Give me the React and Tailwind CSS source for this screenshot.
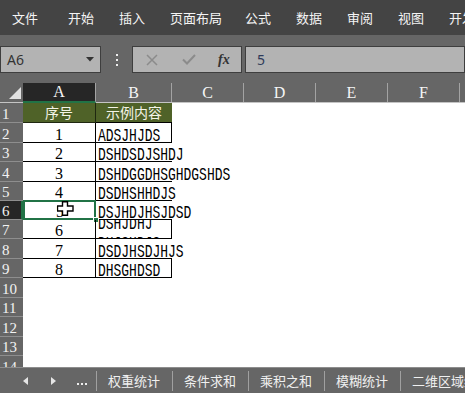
import React from 'react';

const cjk = "font-['Noto_Sans_CJK_SC',sans-serif]";
const serif = "font-['Liberation_Serif',serif]";
const mono = "inline-block origin-left scale-x-[0.72] whitespace-nowrap font-['Liberation_Mono',monospace] text-[18px] text-black";

const tabs = [
  { t: '文件', w: 'w-[56px]' },
  { t: '开始', w: 'w-[51px]' },
  { t: '插入', w: 'w-[51px]' },
  { t: '页面布局', w: 'w-[75px]' },
  { t: '公式', w: 'w-[51px]' },
  { t: '数据', w: 'w-[51px]' },
  { t: '审阅', w: 'w-[51px]' },
  { t: '视图', w: 'w-[51px]' },
  { t: '开发工具', w: 'w-[75px]' },
];

const cols = [
  { k: 'C', w: 'w-[72px]' },
  { k: 'D', w: 'w-[72px]' },
  { k: 'E', w: 'w-[72px]' },
  { k: 'F', w: 'w-[72px]' },
];

// B column: text, whether it spills into C (no right border), wrapped second line
const rows = [
  { n: 1, h: 'h-[20px]' },
  { n: 2, h: 'h-[20px]', a: '1', b: 'ADSJHJDS', box: true },
  { n: 3, h: 'h-[19px]', a: '2', b: 'DSHDSDJSHDJ' },
  { n: 4, h: 'h-[20px]', a: '3', b: 'DSHDGGDHSGHDGSHDS' },
  { n: 5, h: 'h-[19px]', a: '4', b: 'DSDHSHHDJS' },
  { n: 6, h: 'h-[19px]', a: '5', b: 'DSJHDJHSJDSD', sel: true },
  { n: 7, h: 'h-[19px]', a: '6', b: 'DSHJDHJ', b2: 'DHJSHDJS', box: true },
  { n: 8, h: 'h-[20px]', a: '7', b: 'DSDJHSDJHJS' },
  { n: 9, h: 'h-[19px]', a: '8', b: 'DHSGHDSD', box: true },
  { n: 10, h: 'h-[20px]' },
  { n: 11, h: 'h-[19px]' },
  { n: 12, h: 'h-[20px]' },
  { n: 13, h: 'h-[19px]' },
  { n: 14, h: 'h-[20px]' },
];

const sheets = ['权重统计', '条件求和', '乘积之和', '模糊统计', '二维区域统计'];

function Cursor() {
  return (
    <svg width="17" height="15" viewBox="0 0 17 15" className="absolute left-[32px] top-[0px]">
      <path d="M5.5 0.7h5v4.3h5.5v5h-5.5v4.3h-5v-4.3h-5v-5h5z" fill="#fff" stroke="#000" strokeWidth="1.4" />
    </svg>
  );
}

function SheetRow({ r }) {
  const head = r.n === 1;
  return (
    <div className={`flex ${r.h}`}>
      <div
        className={`w-[23px] shrink-0 flex items-end pb-[2px] pl-[2px] border-b border-[#8e8e8e] ${serif} text-[15px] leading-[12px] text-[#f2f2f2] ${
          r.sel ? 'bg-[#262626] border-r-2 border-r-[#217346]' : 'bg-[#666]'
        }`}
      >
        {r.n}
      </div>
      {head ? (
        <>
          <div className={`w-[73px] shrink-0 bg-[#4f6228] border-b border-r border-black/60 flex items-center justify-center ${cjk} text-[14px] text-[#f4f4e8]`}>
            序号
          </div>
          <div className={`w-[76px] shrink-0 bg-[#4f6228] border-b border-black flex items-center justify-center ${cjk} text-[14px] text-[#f4f4e8]`}>
            示例内容
          </div>
        </>
      ) : r.a ? (
        <>
          <div className={`relative ${r.sel ? 'w-[71px] ml-[2px]' : 'w-[73px]'} shrink-0 border-b border-r border-black flex items-end justify-center pb-[1px] ${serif} text-[16px] leading-[12px] text-black`}>
            {r.a}
            {r.sel && (
              <>
                <div className="absolute -left-[2px] -top-[1px] -right-[1px] -bottom-[1px] border-2 border-[#217346]" />
                <div className="absolute -right-[4px] -bottom-[4px] w-[6px] h-[6px] bg-[#217346] border border-white" />
                <Cursor />
              </>
            )}
          </div>
          {r.b2 ? (
            <div className="w-[76px] shrink-0 border-b border-r border-black overflow-hidden">
              <div className="-mt-[7px] pl-[2px] leading-[18px]">
                <div><span className={mono}>{r.b}</span></div>
                <div><span className={mono}>{r.b2}</span></div>
              </div>
            </div>
          ) : (
            <div className={`w-[76px] shrink-0 border-b border-black ${r.box ? 'border-r' : ''} flex items-end pl-[2px] leading-[12px]`}>
              <span className={mono}>{r.b}</span>
            </div>
          )}
        </>
      ) : null}
    </div>
  );
}

export default function App() {
  return (
    <div className={`w-[465px] h-[393px] overflow-hidden flex flex-col bg-[#666] ${cjk}`}>
      {/* ribbon tabs */}
      <div className="h-[35px] shrink-0 bg-[#444] flex items-center pl-[12px] whitespace-nowrap text-[13px] text-[#f4f4f4]">
        {tabs.map((t) => (
          <div key={t.t} className={`${t.w} shrink-0`}>
            {t.t}
          </div>
        ))}
      </div>

      {/* name box + formula bar */}
      <div className="h-[48px] shrink-0 bg-[#666] flex items-start pt-[11px]">
        <div className="w-[101px] h-[27px] shrink-0 bg-[#b3b3b3] border border-[#3e3e3e] flex items-center pl-[6px] pr-[6px]">
          <span className="font-['Noto_Sans',sans-serif] text-[14px] text-[#333] flex-1">A6</span>
          <svg width="8" height="5" viewBox="0 0 8 5"><path d="M0 0h8L4 4.5z" fill="#333" /></svg>
        </div>
        <div className="w-[31px] h-[27px] shrink-0 flex flex-col items-center justify-center gap-[3px]">
          <div className="w-[2px] h-[2px] bg-[#eee]" />
          <div className="w-[2px] h-[2px] bg-[#eee]" />
          <div className="w-[2px] h-[2px] bg-[#eee]" />
        </div>
        <div className="w-[110px] h-[27px] shrink-0 bg-[#b3b3b3] border border-[#3e3e3e] flex items-center">
          <svg width="12" height="12" viewBox="0 0 12 12" className="ml-[13px]">
            <path d="M1 1l10 10M11 1L1 11" stroke="#8b8b8b" strokeWidth="1.5" />
          </svg>
          <svg width="14" height="11" viewBox="0 0 14 11" className="ml-[24px]">
            <path d="M1 5.5l4 4L13 1" stroke="#8b8b8b" strokeWidth="2" fill="none" />
          </svg>
          <span className={`ml-[22px] ${serif} italic font-bold text-[14px] text-[#333]`}>fx</span>
        </div>
        <div className="flex-1 h-[27px] ml-[3px] bg-[#b3b3b3] border border-[#3e3e3e] flex items-center pl-[11px]">
          <span className="font-['Noto_Sans',sans-serif] text-[14px] text-[#2f3b5a]">5</span>
        </div>
      </div>

      {/* column headers */}
      <div className={`h-[20px] shrink-0 flex border-b border-[#c4c4c4] ${serif} text-[16px] text-[#f6f6f6]`}>
        <div className="w-[23px] shrink-0 relative">
          <svg width="12" height="12" viewBox="0 0 12 12" className="absolute left-[9px] top-[4px]">
            <path d="M0 12L12 0v12z" fill="#e2e2e2" />
          </svg>
        </div>
        <div className="w-[73px] shrink-0 bg-[#262626] border-r border-[#a3a3a3] border-b-2 border-b-[#217346] -mb-[1px] flex items-center justify-center leading-none">
          A
        </div>
        <div className="w-[76px] shrink-0 border-r border-[#a3a3a3] flex items-center justify-center leading-none">B</div>
        {cols.map((c) => (
          <div key={c.k} className={`${c.w} shrink-0 border-r border-[#a3a3a3] flex items-center justify-center leading-none`}>
            {c.k}
          </div>
        ))}
        <div className="flex-1" />
      </div>

      {/* grid */}
      <div className="flex-1 min-h-0 overflow-hidden bg-white relative">
        <div className="absolute left-0 top-0 bottom-0 w-[23px] bg-[#666]" />
        <div className="relative">
          {rows.map((r) => (
            <SheetRow key={r.n} r={r} />
          ))}
        </div>
      </div>

      {/* sheet tabs */}
      <div className="h-[26px] shrink-0 border-t border-[#8d8d8d] bg-[#666] flex items-center text-[13px] text-[#f0f0f0]">
        <div className="w-[96px] shrink-0 flex items-center">
          <svg width="5" height="8" viewBox="0 0 5 8" className="ml-[23px]"><path d="M5 0v8L0 4z" fill="#e6e6e6" /></svg>
          <svg width="5" height="8" viewBox="0 0 5 8" className="ml-[23px]"><path d="M0 0v8l5-4z" fill="#e6e6e6" /></svg>
          <div className="ml-[21px] mt-[6px] flex gap-[2px]">
            <div className="w-[2px] h-[2px] bg-[#eee]" />
            <div className="w-[2px] h-[2px] bg-[#eee]" />
            <div className="w-[2px] h-[2px] bg-[#eee]" />
          </div>
        </div>
        {sheets.map((s) => (
          <div key={s} className="w-[76px] h-[20px] shrink-0 border-l border-[#a0a0a0] flex items-center pl-[11px] whitespace-nowrap leading-none">
            {s}
          </div>
        ))}
      </div>
    </div>
  );
}
